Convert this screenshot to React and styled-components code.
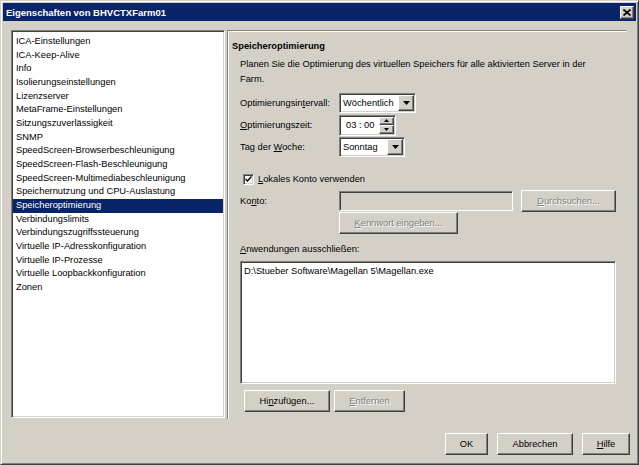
import React from 'react';
import styled, { createGlobalStyle, css } from 'styled-components';

const GlobalStyle = createGlobalStyle`
  html, body {
    margin: 0;
    padding: 0;
    background: #d4d0c8;
  }
  body {
    font-family: "Liberation Sans", Arial, sans-serif;
    font-size: 9.3px;
    color: #000;
  }
`;

const sunken = css`
  border: 1px solid;
  border-color: #808080 #ffffff #ffffff #808080;
  box-shadow: inset 1px 1px 0 #404040, inset -1px -1px 0 #d4d0c8;
`;

const raised = css`
  border: 1px solid;
  border-color: #ffffff #404040 #404040 #ffffff;
  box-shadow: inset -1px -1px 0 #808080, inset 1px 1px 0 #d4d0c8;
`;

const Window = styled.div`
  box-sizing: border-box;
  width: 639px;
  height: 465px;
  background: #d4d0c8;
  border: 1px solid;
  border-color: #d4d0c8 #404040 #404040 #d4d0c8;
  box-shadow: inset 1px 1px 0 #ffffff, inset -1px -1px 0 #808080;
  padding: 2px;
  display: flex;
  flex-direction: column;
`;

const TitleBar = styled.div`
  height: 18px;
  background: #0a246a;
  color: #fff;
  font-weight: bold;
  font-size: 9.5px;
  display: flex;
  align-items: center;
  justify-content: space-between;
  padding: 0 2px 0 3px;
`;

const CloseBtn = styled.div`
  box-sizing: border-box;
  ${raised};
  background: #d4d0c8;
  width: 14px;
  height: 13px;
  display: flex;
  align-items: center;
  justify-content: center;
`;

const Main = styled.div`
  display: flex;
  gap: 2px;
  padding: 9px 0 0 8px;
  height: 389px;
`;

const List = styled.div`
  box-sizing: border-box;
  ${sunken};
  background: #fff;
  width: 214px;
  height: 388px;
  padding: 4px 1px 2px;
`;

const Item = styled.div`
  height: 13.67px;
  line-height: 13.67px;
  padding-left: 3px;
  white-space: nowrap;
  background: ${p => (p.$selected ? '#0a246a' : 'transparent')};
  color: ${p => (p.$selected ? '#fff' : '#000')};
`;

const Panel = styled.div`
  box-sizing: border-box;
  width: 399px;
  height: 389px;
  border-top: 1px solid #808080;
  border-left: 1px solid #808080;
  box-shadow: inset 1px 1px 0 #fff;
  padding: 8px 0 0 4px;
`;

const Heading = styled.div`
  font-weight: bold;
  line-height: 14px;
`;

const Content = styled.div`
  padding-left: 8px;
  width: 376px;
`;

const Desc = styled.div`
  line-height: 15px;
  margin-top: 4px;
`;

const Form = styled.div`
  margin-top: 5px;
`;

const Row = styled.div`
  display: flex;
  align-items: center;
  height: ${p => p.$h || 22}px;
  margin-top: ${p => p.$mt || 0}px;
`;

const Label = styled.div`
  width: 99px;
  flex: none;
`;

const Combo = styled.div`
  box-sizing: border-box;
  ${sunken};
  background: #fff;
  width: ${p => p.$w}px;
  height: 20px;
  display: flex;
  padding: 1px;
`;

const ComboText = styled.span`
  flex: 1;
  padding-left: 2px;
  line-height: 16px;
`;

const ArrowBtn = styled.div`
  box-sizing: border-box;
  ${raised};
  background: #d4d0c8;
  width: ${p => p.$w || 16}px;
  flex: ${p => (p.$half ? 1 : 'none')};
  display: flex;
  align-items: center;
  justify-content: center;
`;

const Spin = styled.div`
  box-sizing: border-box;
  ${sunken};
  background: #fff;
  width: 57px;
  height: 21px;
  display: flex;
  padding: 1px;
`;

const SpinText = styled.span`
  flex: 1;
  padding-left: 5px;
  line-height: 17px;
`;

const SpinCol = styled.div`
  display: flex;
  flex-direction: column;
  width: 15px;
`;

const CheckRow = styled.label`
  display: flex;
  align-items: center;
  gap: 4px;
  height: 14px;
  margin: 14px 0 0 3px;
`;

const Check = styled.span`
  box-sizing: border-box;
  ${sunken};
  background: #fff;
  width: 11px;
  height: 11px;
  display: flex;
  align-items: center;
  justify-content: center;
`;

const TextField = styled.div`
  box-sizing: border-box;
  ${sunken};
  background: #d4d0c8;
  width: 174px;
  height: 20px;
  margin-right: 8px;
`;

const Button = styled.div`
  box-sizing: border-box;
  ${raised};
  background: #d4d0c8;
  width: ${p => p.$w}px;
  height: 22px;
  flex: none;
  display: flex;
  align-items: center;
  justify-content: center;
  color: ${p => (p.$disabled ? '#808080' : '#000')};
  text-shadow: ${p => (p.$disabled ? '1px 1px 0 #fff' : 'none')};
`;

const Indent = styled.div`
  padding-left: 99px;
`;

const SectionLabel = styled.div`
  line-height: 14px;
  margin-top: 8px;
`;

const AppList = styled.div`
  box-sizing: border-box;
  ${sunken};
  background: #fff;
  height: 123px;
  margin-top: 5px;
  padding: 3px 3px;
  line-height: 13px;
`;

const ButtonRow = styled.div`
  display: flex;
  gap: 4px;
  margin: 6px 0 0 4px;
`;

const Footer = styled.div`
  display: flex;
  justify-content: flex-end;
  gap: 9px;
  padding: 14px 6px 0 0;
`;

const U = styled.u`
  text-decoration: underline;
  text-underline-offset: 1px;
`;

const Arrow = ({ up }) => (
  <svg width="7" height="4" viewBox="0 0 7 4">
    <path d={up ? 'M3.5 0L7 4H0z' : 'M0 0h7L3.5 4z'} fill="#000" />
  </svg>
);

const SmallArrow = ({ up }) => (
  <svg width="5" height="3" viewBox="0 0 5 3">
    <path d={up ? 'M2.5 0L5 3H0z' : 'M0 0h5L2.5 3z'} fill="#000" />
  </svg>
);

const items = [
  'ICA-Einstellungen',
  'ICA-Keep-Alive',
  'Info',
  'Isolierungseinstellungen',
  'Lizenzserver',
  'MetaFrame-Einstellungen',
  'Sitzungszuverlässigkeit',
  'SNMP',
  'SpeedScreen-Browserbeschleunigung',
  'SpeedScreen-Flash-Beschleunigung',
  'SpeedScreen-Multimediabeschleunigung',
  'Speichernutzung und CPU-Auslastung',
  'Speicheroptimierung',
  'Verbindungslimits',
  'Verbindungszugriffssteuerung',
  'Virtuelle IP-Adresskonfiguration',
  'Virtuelle IP-Prozesse',
  'Virtuelle Loopbackkonfiguration',
  'Zonen',
];

export default function App() {
  return (
    <>
      <GlobalStyle />
      <Window>
        <TitleBar>
          <span>Eigenschaften von BHVCTXFarm01</span>
          <CloseBtn>
            <svg width="8" height="7" viewBox="0 0 8 7">
              <path d="M0.5 0.5l7 6M7.5 0.5l-7 6" stroke="#000" strokeWidth="1.6" />
            </svg>
          </CloseBtn>
        </TitleBar>

        <Main>
          <List>
            {items.map(name => (
              <Item key={name} $selected={name === 'Speicheroptimierung'}>
                {name}
              </Item>
            ))}
          </List>

          <Panel>
            <Heading>Speicheroptimierung</Heading>
            <Content>
              <Desc>
                Planen Sie die Optimierung des virtuellen Speichers für alle aktivierten Server in der
                <br />
                Farm.
              </Desc>

              <Form>
                <Row>
                  <Label>Optimierungsin<U>t</U>ervall:</Label>
                  <Combo $w={77}>
                    <ComboText>Wöchentlich</ComboText>
                    <ArrowBtn><Arrow /></ArrowBtn>
                  </Combo>
                </Row>
                <Row>
                  <Label><U>O</U>ptimierungszeit:</Label>
                  <Spin>
                    <SpinText>03 : 00</SpinText>
                    <SpinCol>
                      <ArrowBtn $half $w={15}><SmallArrow up /></ArrowBtn>
                      <ArrowBtn $half $w={15}><SmallArrow /></ArrowBtn>
                    </SpinCol>
                  </Spin>
                </Row>
                <Row>
                  <Label>Tag der <U>W</U>oche:</Label>
                  <Combo $w={66}>
                    <ComboText>Sonntag</ComboText>
                    <ArrowBtn><Arrow /></ArrowBtn>
                  </Combo>
                </Row>
              </Form>

              <CheckRow>
                <Check>
                  <svg width="7" height="7" viewBox="0 0 7 7">
                    <path d="M0.5 3l2 2 4-4.5" stroke="#000" strokeWidth="1.5" fill="none" />
                  </svg>
                </Check>
                <span><U>L</U>okales Konto verwenden</span>
              </CheckRow>

              <Row $mt={4}>
                <Label>Ko<U>n</U>to:</Label>
                <TextField />
                <Button $w={95} $disabled><U>D</U>urchsuchen...</Button>
              </Row>
              <Indent>
                <Button $w={119} $disabled><U>K</U>ennwort eingeben...</Button>
              </Indent>

              <SectionLabel><U>A</U>nwendungen ausschließen:</SectionLabel>
              <AppList>D:\Stueber Software\Magellan 5\Magellan.exe</AppList>

              <ButtonRow>
                <Button $w={86}>Hi<U>n</U>zufügen...</Button>
                <Button $w={71} $disabled><U>E</U>ntfernen</Button>
              </ButtonRow>
            </Content>
          </Panel>
        </Main>

        <Footer>
          <Button $w={43}>OK</Button>
          <Button $w={76}>Abbrechen</Button>
          <Button $w={48}><U>H</U>ilfe</Button>
        </Footer>
      </Window>
    </>
  );
}
